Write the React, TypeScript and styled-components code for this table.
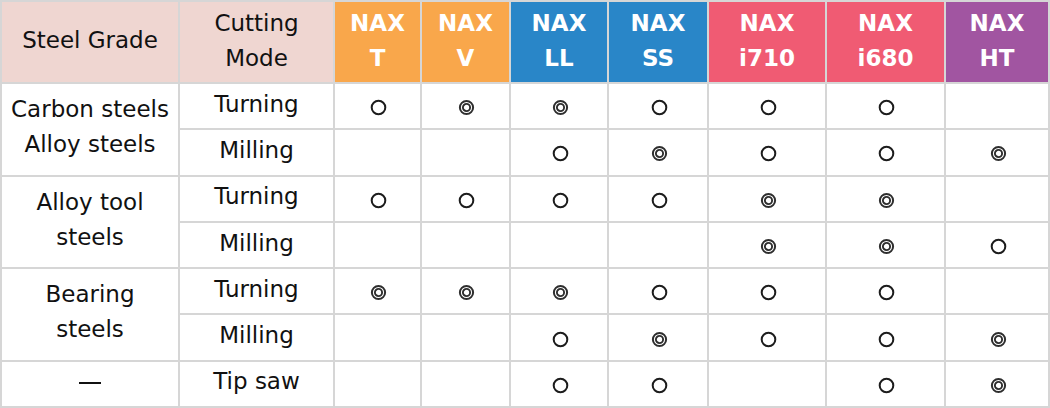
import React from 'react'
import styled, { createGlobalStyle } from 'styled-components'

const GlobalStyle = createGlobalStyle`
    html, body {
        margin: 0;
        padding: 0;
        background: #ffffff;
    }
    body {
        font-family: 'DejaVu Sans', Verdana, sans-serif;
        color: #111111;
    }
`

const Table = styled.table`
    width: 1048px;
    border-collapse: collapse;
    table-layout: fixed;
    font-size: 23px;
    line-height: 35px;

    td, th {
        border: 2px solid #d6d6d6;
        text-align: center;
        padding: 0;
    }
`

const HeadRow = styled.tr`
    height: 82px;
`

const BodyRow = styled.tr`
    height: 46.3px;
`

const LabelHead = styled.th`
    background-color: #efd6d1;
    font-weight: normal;
    padding-bottom: 3px !important;
`

const ProductHead = styled.th<{ $bg: string }>`
    background-color: ${p => p.$bg};
    color: #ffffff;
    font-weight: bold;
    padding-bottom: 3px !important;
`

const TextCell = styled.td`
    padding-bottom: 4px !important;
`

const MarkCell = styled.td`
    padding-top: 3px !important;

    svg {
        display: block;
        margin: 0 auto;
        position: relative;
        left: 1px;
    }
`

const Dash = styled.span`
    display: inline-block;
    width: 22px;
    height: 2px;
    background: #111;
    vertical-align: middle;
`

type Mark = 'o' | 'd' | ''

const Symbol = ({ kind }: { kind: Mark }) => {
    if (kind === 'o') {
        return (
            <svg width="17" height="17" viewBox="0 0 17 17">
                <circle cx="8.5" cy="8.5" r="6.8" fill="none" stroke="#1c1c1c" strokeWidth="2" />
            </svg>
        )
    }
    if (kind === 'd') {
        return (
            <svg width="17" height="17" viewBox="0 0 17 17">
                <circle cx="8.5" cy="8.5" r="6.6" fill="none" stroke="#2e2e2e" strokeWidth="2" />
                <circle cx="8.5" cy="8.5" r="3.6" fill="none" stroke="#2e2e2e" strokeWidth="1.9" />
            </svg>
        )
    }
    return null
}

const products = [
    { top: 'NAX', bottom: 'T', bg: '#f9a74b' },
    { top: 'NAX', bottom: 'V', bg: '#f9a74b' },
    { top: 'NAX', bottom: 'LL', bg: '#2986c8' },
    { top: 'NAX', bottom: 'SS', bg: '#2986c8' },
    { top: 'NAX', bottom: 'i710', bg: '#f05b73' },
    { top: 'NAX', bottom: 'i680', bg: '#f05b73' },
    { top: 'NAX', bottom: 'HT', bg: '#a155a1' },
]

const widths = [178, 155, 87, 89, 98, 100, 118, 119, 104]

interface Row {
    grade?: React.ReactNode
    span?: number
    mode: string
    marks: Mark[]
}

const rows: Row[] = [
    { grade: <>Carbon steels<br />Alloy steels</>, span: 2, mode: 'Turning', marks: ['o', 'd', 'd', 'o', 'o', 'o', ''] },
    { mode: 'Milling', marks: ['', '', 'o', 'd', 'o', 'o', 'd'] },
    { grade: <>Alloy tool<br />steels</>, span: 2, mode: 'Turning', marks: ['o', 'o', 'o', 'o', 'd', 'd', ''] },
    { mode: 'Milling', marks: ['', '', '', '', 'd', 'd', 'o'] },
    { grade: <>Bearing<br />steels</>, span: 2, mode: 'Turning', marks: ['d', 'd', 'd', 'o', 'o', 'o', ''] },
    { mode: 'Milling', marks: ['', '', 'o', 'd', 'o', 'o', 'd'] },
    { grade: <Dash />, span: 1, mode: 'Tip saw', marks: ['', '', 'o', 'o', '', 'o', 'd'] },
]

const App = () => {
    return (
        <>
            <GlobalStyle />
            <Table>
                <colgroup>
                    {widths.map((w, i) => <col key={i} style={{ width: w }} />)}
                </colgroup>
                <thead>
                    <HeadRow>
                        <LabelHead>Steel Grade</LabelHead>
                        <LabelHead>Cutting<br />Mode</LabelHead>
                        {products.map((p, i) => (
                            <ProductHead key={i} $bg={p.bg}>{p.top}<br />{p.bottom}</ProductHead>
                        ))}
                    </HeadRow>
                </thead>
                <tbody>
                    {rows.map((r, i) => (
                        <BodyRow key={i}>
                            {r.grade && <TextCell rowSpan={r.span}>{r.grade}</TextCell>}
                            <TextCell>{r.mode}</TextCell>
                            {r.marks.map((m, j) => (
                                <MarkCell key={j}><Symbol kind={m} /></MarkCell>
                            ))}
                        </BodyRow>
                    ))}
                </tbody>
            </Table>
        </>
    )
}

export default App
